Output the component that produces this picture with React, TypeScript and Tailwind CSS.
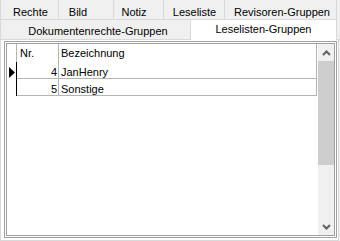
import React from "react";

const topTabs = [
  { label: "Rechte", w: "w-[59px] border-l", pad: "pl-[2px]" },
  { label: "Bild", w: "w-[55px]", pad: "pr-[16px]" },
  { label: "Notiz", w: "w-[50px]", pad: "pr-[9px]" },
  { label: "Leseliste", w: "w-[61px]", pad: "pl-[1px]" },
  { label: "Revisoren-Gruppen", w: "w-[112px]", pad: "pl-[3px]" },
];

const rows = [
  { nr: 4, name: "JanHenry", current: true },
  { nr: 5, name: "Sonstige", current: false },
];

function Chevron({ up }: { up?: boolean }) {
  return (
    <svg width="9" height="6" viewBox="0 0 9 6" className="block">
      <polyline
        points={up ? "1,5 4.5,1.5 8,5" : "1,1 4.5,4.5 8,1"}
        fill="none"
        stroke="#606060"
        strokeWidth="2"
      />
    </svg>
  );
}

export default function App() {
  return (
    <div className="w-[340px] h-[241px] overflow-hidden bg-[#f0f0f0] font-['Liberation_Sans',Arial,sans-serif] text-[11px] leading-[12px] text-black">
      {/* obere Reiterzeile */}
      <div className="flex h-[20px]">
        {topTabs.map((t) => (
          <div
            key={t.label}
            className={`${t.w} ${t.pad} flex justify-center pt-[6px] border-r border-b border-[#d9d9d9] whitespace-nowrap`}
          >
            {t.label}
          </div>
        ))}
      </div>

      {/* zweite Reiterzeile */}
      <div className="flex h-[20px]">
        <div className="w-[190px] pl-[5px] flex justify-center pt-[5px] border-l border-b border-[#d9d9d9] whitespace-nowrap">
          Dokumentenrechte-Gruppen
        </div>
        <div className="relative z-10 -mt-px w-[147px] h-[21px] flex justify-center pt-[3px] bg-white border-l border-r border-t border-[#d9d9d9] whitespace-nowrap">
          Leselisten-Gruppen
        </div>
        <div className="flex-1 border-b border-[#d9d9d9]" />
      </div>

      {/* Seiteninhalt */}
      <div className="w-[339px] h-[201px] bg-white border-l border-r border-b border-[#d9d9d9] pl-[3px] pt-px">
        <div className="w-[333px] h-[197px] border-[3px] border-double border-[#a0a0a0] flex">
          {/* Tabelle */}
          <div className="w-[310px] flex flex-col">
            <div className="flex h-[18px]">
              <div className="w-[10px] border-r border-[#b4b4b4]" />
              <div className="w-[42px] pl-[3px] pt-[3px] border-r border-[#b4b4b4]">Nr.</div>
              <div className="w-[258px] pl-[2px] pt-[3px] border-r border-[#b4b4b4]">Bezeichnung</div>
            </div>
            {rows.map((r) => (
              <div key={r.nr} className="flex h-[17px]">
                <div className="w-[10px] border-r border-black pl-[2px] pt-[5px]">
                  {r.current && (
                    <svg width="6" height="11" viewBox="0 0 6 11" className="block">
                      <polygon points="0,0 6,5.5 0,11" fill="#000" />
                    </svg>
                  )}
                </div>
                <div className="w-[42px] pr-[1px] pt-[4px] text-right border-r border-b border-[#b4b4b4]">
                  {r.nr}
                </div>
                <div className="w-[258px] pl-[2px] pt-[4px] border-r border-b border-[#b4b4b4]">
                  {r.name}
                </div>
              </div>
            ))}
          </div>

          {/* Bildlaufleiste */}
          <div className="ml-px w-[17px] flex flex-col bg-[#f0f0f0]">
            <div className="h-[17px] flex items-center justify-center">
              <Chevron up />
            </div>
            <div className="h-[104px] bg-[#cdcdcd]" />
            <div className="flex-1" />
            <div className="h-[17px] flex items-center justify-center">
              <Chevron />
            </div>
          </div>
        </div>
      </div>
    </div>
  );
}
